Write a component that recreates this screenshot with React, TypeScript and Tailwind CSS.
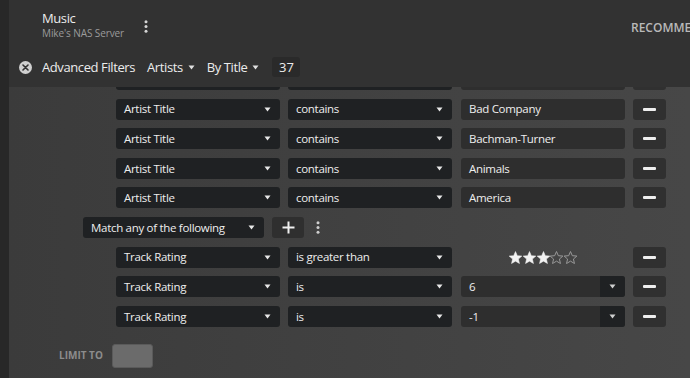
import React from "react";

type Cond = {
  field: string;
  op: string;
  value?: string;
  kind: "text" | "stars" | "select";
};

const ARTIST_ROWS: Cond[] = [
  { field: "Artist Title", op: "contains", value: "", kind: "text" },
  { field: "Artist Title", op: "contains", value: "Bad Company", kind: "text" },
  { field: "Artist Title", op: "contains", value: "Bachman-Turner", kind: "text" },
  { field: "Artist Title", op: "contains", value: "Animals", kind: "text" },
  { field: "Artist Title", op: "contains", value: "America", kind: "text" },
];

const RATING_ROWS: Cond[] = [
  { field: "Track Rating", op: "is greater than", kind: "stars" },
  { field: "Track Rating", op: "is", value: "6", kind: "select" },
  { field: "Track Rating", op: "is", value: "-1", kind: "select" },
];

const Caret = ({ className = "" }: { className?: string }) => (
  <svg className={className} width="7" height="5" viewBox="0 0 7 5">
    <path d="M0.5 0.5h6L3.5 4.5z" fill="currentColor" />
  </svg>
);

const VDots = ({ className = "" }: { className?: string }) => (
  <svg className={className} width="4" height="13" viewBox="0 0 4 13">
    <circle cx="2" cy="1.7" r="1.5" fill="currentColor" />
    <circle cx="2" cy="6.5" r="1.5" fill="currentColor" />
    <circle cx="2" cy="11.3" r="1.5" fill="currentColor" />
  </svg>
);

const Star = ({ filled }: { filled: boolean }) => (
  <svg width="13" height="13" viewBox="2 2 20 20">
    <path
      d="M12 2.8l2.8 6.4 7 .6-5.3 4.6 1.6 6.9-6.1-3.7-6.1 3.7 1.6-6.9-5.3-4.6 7-.6z"
      fill={filled ? "#f2f2f2" : "none"}
      stroke={filled ? "#f2f2f2" : "#9a9a9a"}
      strokeWidth={filled ? 0.8 : 1.5}
      strokeLinejoin="round"
    />
  </svg>
);

const Select = ({ label, className = "" }: { label: string; className?: string }) => (
  <div
    className={`flex h-[21px] items-center justify-between rounded-[3px] bg-[#1f2123] pl-2 pr-[9px] text-[11.5px] text-[#eeeeee] ${className}`}
  >
    <span className="whitespace-nowrap">{label}</span>
    <Caret className="text-[#e8e8e8]" />
  </div>
);

const MinusButton = () => (
  <div className="flex h-[21px] w-[33px] items-center justify-center rounded-[3px] bg-[#303030]">
    <div className="h-[3px] w-[13px] rounded-[1px] bg-[#eeeeee]" />
  </div>
);

const ValueCell = ({ row }: { row: Cond }) => {
  if (row.kind === "stars") {
    return (
      <div className="flex h-[21px] w-[164px] items-center justify-center gap-[0.7px]">
        {[0, 1, 2, 3, 4].map((i) => (
          <Star key={i} filled={i < 3} />
        ))}
      </div>
    );
  }
  if (row.kind === "select") {
    return (
      <div className="flex h-[21px] w-[164px] overflow-hidden rounded-[3px] bg-[#2e2e2e] text-[11.5px] text-[#eeeeee]">
        <div className="flex flex-1 items-center pl-[8px]">{row.value}</div>
        <div className="flex w-[25px] items-center justify-center bg-[#1f2123]">
          <Caret className="text-[#cfcfcf]" />
        </div>
      </div>
    );
  }
  return (
    <div className="flex h-[21px] w-[164px] items-center rounded-[3px] bg-[#2e2e2e] pl-[8px] text-[11.5px] text-[#eeeeee]">
      {row.value}
    </div>
  );
};

const ConditionRow = ({ row }: { row: Cond }) => (
  <div className="ml-[107px] flex items-center gap-[8px]">
    <Select label={row.field} className="w-[164px]" />
    <Select label={row.op} className="w-[164px]" />
    <div className="ml-[1px]">
      <ValueCell row={row} />
    </div>
    <MinusButton />
  </div>
);

export default function App() {
  return (
    <div
      className="flex h-[378px] w-[690px] overflow-hidden bg-[#2a2a2a] text-[#eeeeee]"
      style={{ fontFamily: '"Open Sans", "Noto Sans", sans-serif' }}
    >
      <div className="w-[9px] shrink-0 bg-[#282828]" />
      <div className="flex min-w-0 flex-1 flex-col">
        <header className="flex h-[87px] shrink-0 flex-col bg-[#323232]">
          <div className="flex h-[56px] items-start pt-[10px]">
            <div className="ml-[33px] flex flex-col">
              <span className="text-[13px] leading-[16px] font-medium tracking-[-0.4px] text-[#ececec]">Music</span>
              <span className="text-[10px] leading-[14px] tracking-[-0.1px] text-[#9b9b9b]">Mike's NAS Server</span>
            </div>
            <VDots className="ml-[20px] mt-[10px] text-[#d6d6d6]" />
            <div className="flex-1" />
            <div className="mt-[9px] w-[59px] overflow-hidden whitespace-nowrap text-[12px] leading-[18px] font-semibold text-[#b9b9b9]">
              RECOMMENDED
            </div>
          </div>
          <div className="flex h-[22px] items-center text-[13px] leading-[18px] tracking-[-0.4px] text-[#ececec]">
            <div className="ml-[10px] flex h-[13px] w-[13px] items-center justify-center rounded-full bg-[#d0d0d0]">
              <svg width="7" height="7" viewBox="0 0 7 7">
                <path d="M1 1l5 5M6 1L1 6" stroke="#323232" strokeWidth="1.6" strokeLinecap="round" />
              </svg>
            </div>
            <span className="ml-[10px] whitespace-nowrap">Advanced Filters</span>
            <span className="ml-[12px] flex items-center gap-[5px] whitespace-nowrap">
              Artists <Caret className="text-[#e0e0e0]" />
            </span>
            <span className="ml-[12px] flex items-center gap-[5px] whitespace-nowrap">
              By Title <Caret className="text-[#e0e0e0]" />
            </span>
            <span className="ml-[13px] flex h-[20px] w-[28px] items-center justify-center rounded-[3px] bg-[#2a2a2a] tracking-normal">
              37
            </span>
          </div>
        </header>
        <main className="flex-1 overflow-hidden bg-gradient-to-r from-[#3b3b3b] to-[#474747]">
          <div className="-mt-[18px] flex flex-col gap-[8.6px] tracking-[-0.3px]">
            {ARTIST_ROWS.map((r, i) => (
              <ConditionRow key={i} row={r} />
            ))}
            <div className="ml-[74px] flex items-center">
              <Select label="Match any of the following" className="w-[181px]" />
              <div className="ml-[8px] flex h-[21px] w-[32px] items-center justify-center rounded-[3px] bg-[#2f2f2f]">
                <svg width="13" height="13" viewBox="0 0 13 13">
                  <path d="M6.5 0.5v12M0.5 6.5h12" stroke="#f0f0f0" strokeWidth="2" />
                </svg>
              </div>
              <VDots className="ml-[12px] text-[#cfcfcf]" />
            </div>
            {RATING_ROWS.map((r, i) => (
              <ConditionRow key={i} row={r} />
            ))}
          </div>
          <div className="mt-[17px] flex items-center">
            <span className="ml-[50px] text-[10px] font-bold text-[#8c8c8c]">LIMIT TO</span>
            <div className="ml-[9px] h-[24px] w-[41px] rounded-[3px] border border-[#5a5a5a] bg-[#6b6b6b]" />
          </div>
        </main>
      </div>
    </div>
  );
}
